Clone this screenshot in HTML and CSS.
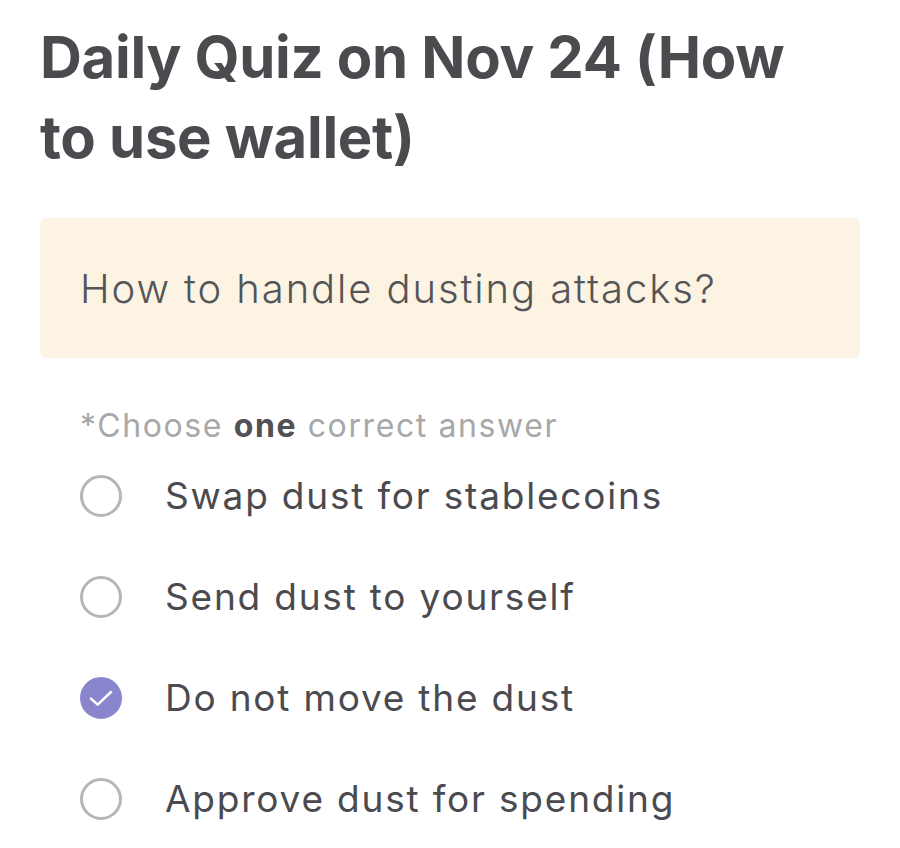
FILE: index.html
```html
<!DOCTYPE html>
<html lang="en">
<head>
  <meta charset="UTF-8" />
  <meta name="viewport" content="width=device-width, initial-scale=1.0" />
  <title>Daily Quiz</title>
  <link rel="stylesheet" href="styles.css">
</head>
<body>
  <div class="quiz">
    <h1>Daily Quiz on Nov 24 (How to use wallet)</h1>

    <div class="question">How to handle dusting attacks?</div>

    <p class="hint">*Choose <b>one</b> correct answer</p>

    <ul class="options">
      <li class="option">
        <span class="radio"></span>
        <span>Swap dust for stablecoins</span>
      </li>
      <li class="option">
        <span class="radio"></span>
        <span>Send dust to yourself</span>
      </li>
      <li class="option selected">
        <span class="radio">
          <svg class="check" viewBox="0 0 24 24"><path d="M4.5 12.5L9.5 17L19.5 7.5" fill="none" stroke="#fff" stroke-width="1.9" stroke-linecap="round" stroke-linejoin="round"/></svg>
        </span>
        <span>Do not move the dust</span>
      </li>
      <li class="option">
        <span class="radio"></span>
        <span>Approve dust for spending</span>
      </li>
    </ul>
  </div>
</body>
</html>
```

FILE: styles.css
```css
* {
  box-sizing: border-box;
  margin: 0;
  padding: 0;
}

body {
  background: #ffffff;
  font-family: 'Inter', 'Noto Sans', sans-serif;
  color: #4a4a4f;
}

.quiz {
  padding: 17px 40px 0 40px;
}

h1 {
  font-size: 58px;
  font-weight: 700;
  line-height: 80px;
  color: #4a4a4f;
  letter-spacing: -0.3px;
  max-width: 790px;
}

.question {
  margin-top: 41px;
  background: #fdf3e3;
  border-radius: 6px;
  height: 140px;
  padding: 0 40px;
  display: flex;
  align-items: center;
  font-size: 40px;
  font-weight: 300;
  letter-spacing: 1.9px;
  color: #555558;
}

.hint {
  margin: 48px 0 0 40px;
  font-size: 32px;
  letter-spacing: 1.6px;
  color: #a8a8a8;
}

.hint b {
  color: #505055;
  font-weight: 700;
}

.options {
  list-style: none;
}

.option {
  display: flex;
  align-items: center;
  height: 101px;
  padding-left: 40px;
  font-size: 37px;
  letter-spacing: 1.8px;
  color: #4a4a4f;
}

.radio {
  width: 42px;
  height: 42px;
  border-radius: 50%;
  border: 3px solid #b6b6b6;
  margin-right: 43px;
  flex-shrink: 0;
  display: flex;
  align-items: center;
  justify-content: center;
}

.check {
  width: 32px;
  height: 32px;
  flex-shrink: 0;
}

.option.selected .radio {
  background: #8a86cd;
  border-color: #8a86cd;
}
```
